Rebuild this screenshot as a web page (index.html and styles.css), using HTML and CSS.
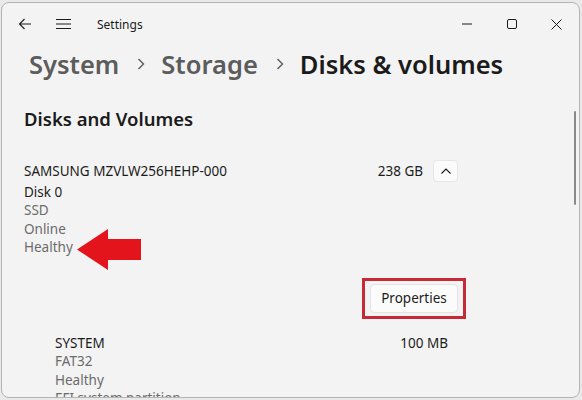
FILE: index.html
```html
<!DOCTYPE html>
<html lang="en">
<head>
<meta charset="utf-8">
<title>Settings</title>
<link rel="stylesheet" href="styles.css">
</head>
<body>
<div class="window">
  <header class="titlebar">
    <div class="nav">
      <svg class="ico back" width="14" height="12" viewBox="0 0 14 12"><path d="M13 6H1.5M6.5 1L1.5 6l5 5" fill="none" stroke="#1b1b1b" stroke-width="1.1"/></svg>
      <svg class="ico menu" width="15" height="12" viewBox="0 0 15 12"><path d="M0 1.5h15M0 6h15M0 10.5h15" fill="none" stroke="#1b1b1b" stroke-width="1.1"/></svg>
      <span class="apptitle">Settings</span>
    </div>
    <div class="caption">
      <span class="capbtn"><svg width="10" height="10" viewBox="0 0 10 10"><path d="M0 5h10" stroke="#1b1b1b" stroke-width="1"/></svg></span>
      <span class="capbtn"><svg width="10" height="10" viewBox="0 0 10 10"><rect x="0.5" y="0.5" width="9" height="9" rx="1.5" fill="none" stroke="#1b1b1b" stroke-width="1"/></svg></span>
      <span class="capbtn"><svg width="11" height="11" viewBox="0 0 11 11"><path d="M0.5 0.5l10 10M10.5 0.5l-10 10" stroke="#1b1b1b" stroke-width="1"/></svg></span>
    </div>
  </header>

  <h1 class="crumbs">
    <span class="crumb">System</span>
    <svg class="chev" width="8" height="12" viewBox="0 0 8 12"><path d="M1.5 1l5 5-5 5" fill="none" stroke="#5c5c5c" stroke-width="1.4"/></svg>
    <span class="crumb">Storage</span>
    <svg class="chev" width="8" height="12" viewBox="0 0 8 12"><path d="M1.5 1l5 5-5 5" fill="none" stroke="#5c5c5c" stroke-width="1.4"/></svg>
    <span class="crumb current">Disks &amp; volumes</span>
  </h1>

  <main class="content">
    <h2 class="section">Disks and Volumes</h2>

    <section class="disk">
      <div class="diskrow">
        <div class="info">
          <div class="name">SAMSUNG MZVLW256HEHP-000</div>
          <div class="primary disk0">Disk 0</div>
          <div class="muted">SSD</div>
          <div class="muted">Online</div>
          <div class="muted">Healthy</div>
        </div>
        <div class="right">
          <span class="size">238 GB</span>
          <span class="expander"><svg width="10" height="6" viewBox="0 0 10 6"><path d="M0.5 5.5L5 1l4.5 4.5" fill="none" stroke="#1b1b1b" stroke-width="1.1"/></svg></span>
        </div>
        <svg class="arrow" width="65" height="41" viewBox="0 0 65 41"><polygon points="0,20.5 31,0 31,10 64,10 64,31 31,31 31,41" fill="#e3141b"/></svg>
      </div>

      <div class="actions">
        <div class="highlight"><button class="btn">Properties</button></div>
      </div>

      <div class="partition">
        <div class="info">
          <div class="primary">SYSTEM</div>
          <div class="muted">FAT32</div>
          <div class="muted">Healthy</div>
          <div class="muted">EFI system partition</div>
        </div>
        <span class="psize">100 MB</span>
      </div>
    </section>
  </main>
  <div class="scrollbar"></div>
</div>
</body>
</html>
```
FILE: styles.css
```css
* { box-sizing: border-box; }
html, body { margin: 0; padding: 0; }
body {
  width: 582px;
  height: 400px;
  overflow: hidden;
  background: #e9e9e9;
  font-family: "Noto Sans", "Open Sans", sans-serif;
  color: #1b1b1b;
  padding: 2px 2px 0 1px;
}
.window {
  position: relative;
  height: 396px;
  background: #f3f3f3;
  border: 1px solid #b5b5b5;
  border-radius: 8px;
  overflow: hidden;
}
.titlebar {
  height: 42px;
  display: flex;
  align-items: center;
  justify-content: space-between;
}
.nav {
  display: flex;
  align-items: center;
  padding-left: 16px;
}
.back { margin-right: 24px; }
.menu { margin-right: 26px; }
.apptitle { font-size: 12px; color: #1b1b1b; }
.caption { display: flex; align-items: center; padding-right: 0; }
.capbtn { width: 45px; display: flex; justify-content: center; align-items: center; }
.crumbs {
  margin: 0;
  padding: 1px 0 2px 27px;
  font-size: 25.5px;
  font-weight: 600;
  line-height: 36px;
  display: flex;
  align-items: center;
  color: #5c5c5c;
}
.chev { margin: 0 16px 0 18px; }
.current { color: #1b1b1b; }
.content {
  padding: 22px 0 0 22px;
  width: 456px;
}
.section {
  margin: 0 0 30px;
  font-size: 18.5px;
  font-weight: 600;
  line-height: 26px;
}
.diskrow {
  position: relative;
  display: flex;
  justify-content: space-between;
  font-size: 13.5px;
  line-height: 18.5px;
}
.disk0 { margin-top: 2px; }
.right { display: flex; align-items: center; height: 22px; margin-top: -2px; }
.size { margin-right: 10px; }
.expander {
  width: 25px; height: 22px;
  background: #fbfbfb;
  border: 1px solid #e6e6e6;
  border-radius: 4px;
  display: flex; align-items: center; justify-content: center;
}
.muted { color: #6b6b6b; }
.arrow { position: absolute; left: 53px; top: 67px; }
.actions {
  display: flex;
  justify-content: flex-end;
  margin: 21px -8px 0 0;
}
.highlight {
  border: 3px solid #c62a36;
  padding: 3px 5px;
}
.btn {
  font-family: inherit;
  font-size: 13.5px;
  color: #1b1b1b;
  width: 88px;
  height: 29px;
  background: #fbfbfb;
  border: 1px solid #e3e3e3;
  border-radius: 4px;
}
.partition {
  display: flex;
  justify-content: space-between;
  padding: 15px 10px 0 31px;
  font-size: 13.5px;
  line-height: 18.5px;
}
.scrollbar {
  position: absolute;
  right: 3px;
  top: 108px;
  width: 2px;
  height: 94px;
  border-radius: 1px;
  background: #8a8a8a;
}
```
